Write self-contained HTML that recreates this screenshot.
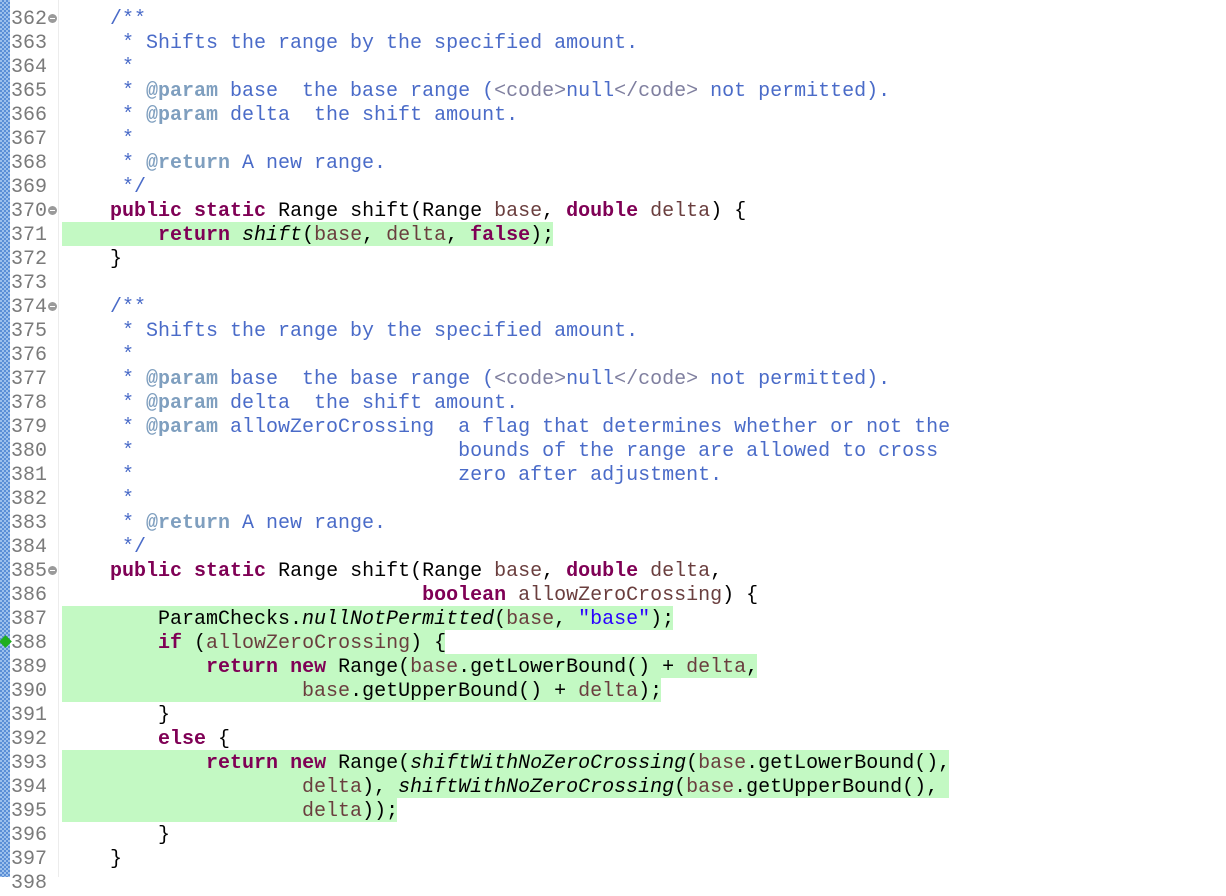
<!DOCTYPE html>
<html><head><meta charset="utf-8"><style>
html,body{margin:0;padding:0;background:#fff;width:1226px;height:877px;overflow:hidden}
.stripe{position:absolute;left:0;top:0;width:10px;height:877px;
background-color:#9cc0ec;background-image:linear-gradient(45deg,#5b8fd6 25%,transparent 25%,transparent 75%,#5b8fd6 75%),linear-gradient(45deg,#5b8fd6 25%,transparent 25%,transparent 75%,#5b8fd6 75%);background-size:4px 4px;background-position:0 0,2px 2px}
.div{position:absolute;left:58px;top:0;width:1px;height:877px;background:#ececec}
.hl{position:absolute;left:62px;height:24px;background:#c3f9c3}
.nums{position:absolute;left:11px;top:-16px;font:20px/24px "Liberation Mono",monospace;color:#7a7a7a;white-space:pre}
.code{position:absolute;left:62px;top:-16px;font:20px/24px "Liberation Mono",monospace;color:#000;white-space:pre}
.c{color:#4a6bc8}.t{color:#7f9fbf;font-weight:bold}.h{color:#7f7f9f}
.k{color:#7f0055;font-weight:bold}.v{color:#6a3e3e}.s{color:#2a00ff}.i{font-style:italic}
.fold{display:inline-block;width:9px;height:9px;border-radius:50%;background:#9a9a9a;position:relative;top:-1px;margin-left:1px}
.fold:after{content:"";position:absolute;left:2px;top:4px;width:5px;height:1px;background:#fff}
.bp{position:absolute;left:1px;top:637px;width:9px;height:9px;background:#1fae1f;transform:rotate(45deg)}
</style></head><body>
<div class="stripe"></div><div class="div"></div>
<div class="hl" style="top:222px;width:491px"></div>
<div class="hl" style="top:606px;width:611px"></div>
<div class="hl" style="top:630px;width:383px"></div>
<div class="hl" style="top:654px;width:695px"></div>
<div class="hl" style="top:678px;width:599px"></div>
<div class="hl" style="top:750px;width:887px"></div>
<div class="hl" style="top:774px;width:887px"></div>
<div class="hl" style="top:798px;width:335px"></div>
<div class="bp"></div>
<div class="nums">361
362<span class="fold"></span>
363
364
365
366
367
368
369
370<span class="fold"></span>
371
372
373
374<span class="fold"></span>
375
376
377
378
379
380
381
382
383
384
385<span class="fold"></span>
386
387
388
389
390
391
392
393
394
395
396
397
398</div>
<div class="code">
    <span class="c">/**</span>
<span class="c">     * Shifts the range by the specified amount.</span>
<span class="c">     *</span>
<span class="c">     * </span><span class="t">@param</span><span class="c"> base  the base range (</span><span class="h">&lt;code&gt;</span><span class="c">null</span><span class="h">&lt;/code&gt;</span><span class="c"> not permitted).</span>
<span class="c">     * </span><span class="t">@param</span><span class="c"> delta  the shift amount.</span>
<span class="c">     *</span>
<span class="c">     * </span><span class="t">@return</span><span class="c"> A new range.</span>
<span class="c">     */</span>
    <span class="k">public</span> <span class="k">static</span> Range shift(Range <span class="v">base</span>, <span class="k">double</span> <span class="v">delta</span>) {
        <span class="k">return</span> <span class="i">shift</span>(<span class="v">base</span>, <span class="v">delta</span>, <span class="k">false</span>);
    }

    <span class="c">/**</span>
<span class="c">     * Shifts the range by the specified amount.</span>
<span class="c">     *</span>
<span class="c">     * </span><span class="t">@param</span><span class="c"> base  the base range (</span><span class="h">&lt;code&gt;</span><span class="c">null</span><span class="h">&lt;/code&gt;</span><span class="c"> not permitted).</span>
<span class="c">     * </span><span class="t">@param</span><span class="c"> delta  the shift amount.</span>
<span class="c">     * </span><span class="t">@param</span><span class="c"> allowZeroCrossing  a flag that determines whether or not the</span>
<span class="c">     *                           bounds of the range are allowed to cross</span>
<span class="c">     *                           zero after adjustment.</span>
<span class="c">     *</span>
<span class="c">     * </span><span class="t">@return</span><span class="c"> A new range.</span>
<span class="c">     */</span>
    <span class="k">public</span> <span class="k">static</span> Range shift(Range <span class="v">base</span>, <span class="k">double</span> <span class="v">delta</span>,
                              <span class="k">boolean</span> <span class="v">allowZeroCrossing</span>) {
        ParamChecks.<span class="i">nullNotPermitted</span>(<span class="v">base</span>, <span class="s">"base"</span>);
        <span class="k">if</span> (<span class="v">allowZeroCrossing</span>) {
            <span class="k">return</span> <span class="k">new</span> Range(<span class="v">base</span>.getLowerBound() + <span class="v">delta</span>,
                    <span class="v">base</span>.getUpperBound() + <span class="v">delta</span>);
        }
        <span class="k">else</span> {
            <span class="k">return</span> <span class="k">new</span> Range(<span class="i">shiftWithNoZeroCrossing</span>(<span class="v">base</span>.getLowerBound(),
                    <span class="v">delta</span>), <span class="i">shiftWithNoZeroCrossing</span>(<span class="v">base</span>.getUpperBound(),
                    <span class="v">delta</span>));
        }
    }
</div>
</body></html>
